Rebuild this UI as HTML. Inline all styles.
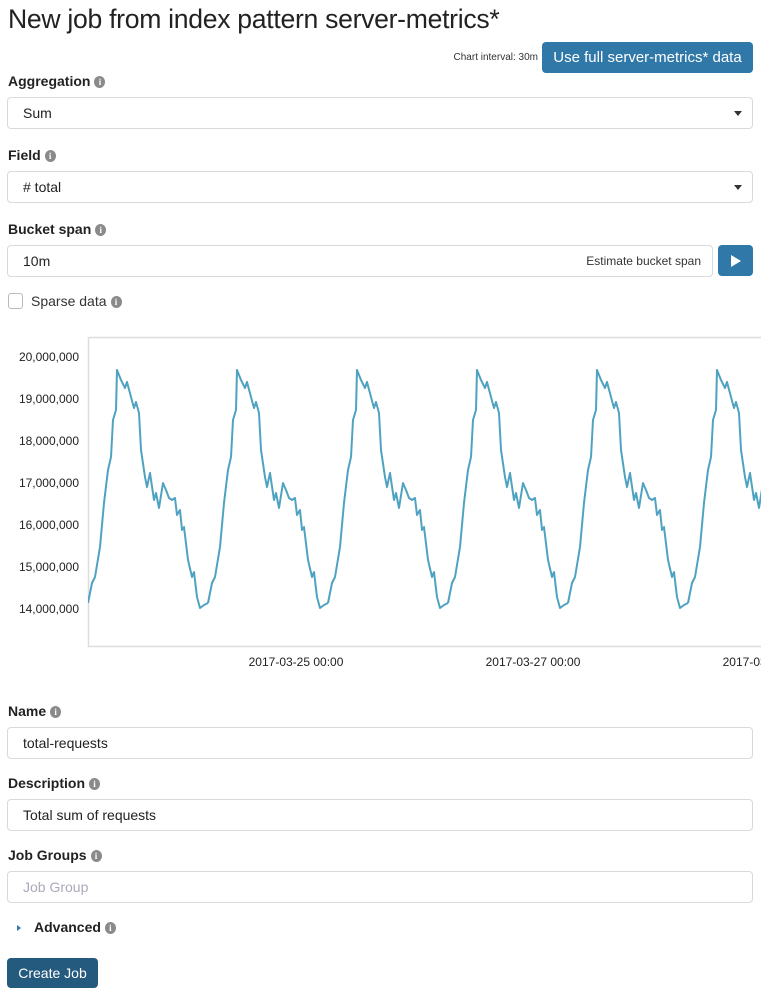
<!DOCTYPE html>
<html><head><meta charset="utf-8"><style>
*{box-sizing:border-box;margin:0;padding:0}
body{width:761px;height:1000px;background:#fff;font-family:"Liberation Sans",sans-serif;color:#2d2d2d;position:relative;overflow:hidden}
.a{position:absolute;white-space:nowrap}
h1{position:absolute;left:8px;top:4px;font-size:26.6px;font-weight:normal;color:#222;letter-spacing:-0.3px}
.lbl{position:absolute;left:8px;font-size:14px;font-weight:bold;color:#222}
.i{display:inline-block;width:11px;height:12px;border-radius:50%;background:#8a8a8a;color:#fff;font-size:9px;line-height:12px;text-align:center;font-weight:bold;vertical-align:0;position:relative;top:-1px;margin-left:4px;font-family:"Liberation Serif",serif}
.box{position:absolute;left:7px;width:746px;height:32px;border:1px solid #d9d9d9;border-radius:4px;font-size:14px;padding-left:15px;line-height:30px;color:#222}
.caret{position:absolute;right:10px;top:13px;width:0;height:0;border-left:4px solid transparent;border-right:4px solid transparent;border-top:5px solid #333}
.btn{position:absolute;background:#3180b0;color:#fff;border-radius:4px;text-align:center}
</style></head><body>
<h1>New job from index pattern server-metrics*</h1>
<div class="a" style="right:223px;top:52px;font-size:10px;color:#333">Chart interval: 30m</div>
<div class="btn" style="left:542px;top:42px;width:211px;height:31px;font-size:15px;line-height:31px;background:#3078a8">Use full server-metrics* data</div>

<div class="lbl" style="top:73px">Aggregation<span class="i">i</span></div>
<div class="box" style="top:97px">Sum<div class="caret"></div></div>
<div class="lbl" style="top:147px">Field<span class="i">i</span></div>
<div class="box" style="top:171px"># total<div class="caret"></div></div>
<div class="lbl" style="top:221px">Bucket span<span class="i">i</span></div>
<div class="box" style="top:245px;width:706px">10m<span style="position:absolute;right:11px;top:0;font-size:12px;color:#333">Estimate bucket span</span></div>
<div class="btn" style="left:718px;top:245px;width:35px;height:31px;background:#3078a8"><div style="position:absolute;left:13px;top:10px;border-top:6px solid transparent;border-bottom:6px solid transparent;border-left:10px solid #fff"></div></div>
<div class="a" style="left:8px;top:293px;width:15px;height:16px;border:1px solid #bbb;border-radius:3px"></div>
<div class="a" style="left:31px;top:293px;font-size:14px;color:#333">Sparse data<span class="i">i</span></div>

<svg class="a" style="left:0;top:330px" width="761" height="345" viewBox="0 330 761 345">
<g font-size="12" fill="#222" text-anchor="end" font-family="Liberation Sans,sans-serif">
<text x="79" y="361">20,000,000</text><text x="79" y="403">19,000,000</text><text x="79" y="445">18,000,000</text><text x="79" y="487">17,000,000</text><text x="79" y="529">16,000,000</text><text x="79" y="571">15,000,000</text><text x="79" y="613">14,000,000</text>
</g>
<g font-size="12" fill="#222" text-anchor="middle" font-family="Liberation Sans,sans-serif">
<text x="296" y="666">2017-03-25 00:00</text><text x="533" y="666">2017-03-27 00:00</text><text x="770" y="666">2017-03-29 00:00</text>
</g>
<path d="M88.5 337.5H761M88.5 337V646.5H761" stroke="#ddd" fill="none" stroke-width="1.5"/>
<defs><clipPath id="c"><rect x="88" y="337" width="673" height="309"/></clipPath>
<polyline id="w" fill="none" stroke="#4fa3c0" stroke-width="2" stroke-linejoin="round" points="88,603 92,583 95,577 100,547 104,503 108,470 111,457 113,420 116,410 117,370 121,380 125,388 127,382 131,397 134,408 136,402 139,413 141,450 145,477 147,487 150,473 154,500 156,493 159,508 163,483 166,490 169,498 172,500 175,498 177,515 180,510 182,530 184,527 188,560 192,577 194,572 197,597 200,608 204,605 208,603"/></defs>
<g clip-path="url(#c)">
<use href="#w"/><use href="#w" transform="translate(120,0)"/><use href="#w" transform="translate(240,0)"/><use href="#w" transform="translate(360,0)"/><use href="#w" transform="translate(480,0)"/><use href="#w" transform="translate(600,0)"/>
</g>
</svg>

<div class="lbl" style="top:703px">Name<span class="i">i</span></div>
<div class="box" style="top:727px">total-requests</div>
<div class="lbl" style="top:775px">Description<span class="i">i</span></div>
<div class="box" style="top:799px">Total sum of requests</div>
<div class="lbl" style="top:847px">Job Groups<span class="i">i</span></div>
<div class="box" style="top:871px;color:#aab">Job Group</div>
<div class="a" style="left:17px;top:925px;border-top:3.5px solid transparent;border-bottom:3.5px solid transparent;border-left:4px solid #3078a8"></div>
<div class="lbl" style="top:919px;left:34px">Advanced<span class="i">i</span></div>
<div class="btn" style="left:7px;top:958px;width:91px;height:30px;background:#245a7e;font-size:14px;line-height:30px">Create Job</div>
</body></html>
